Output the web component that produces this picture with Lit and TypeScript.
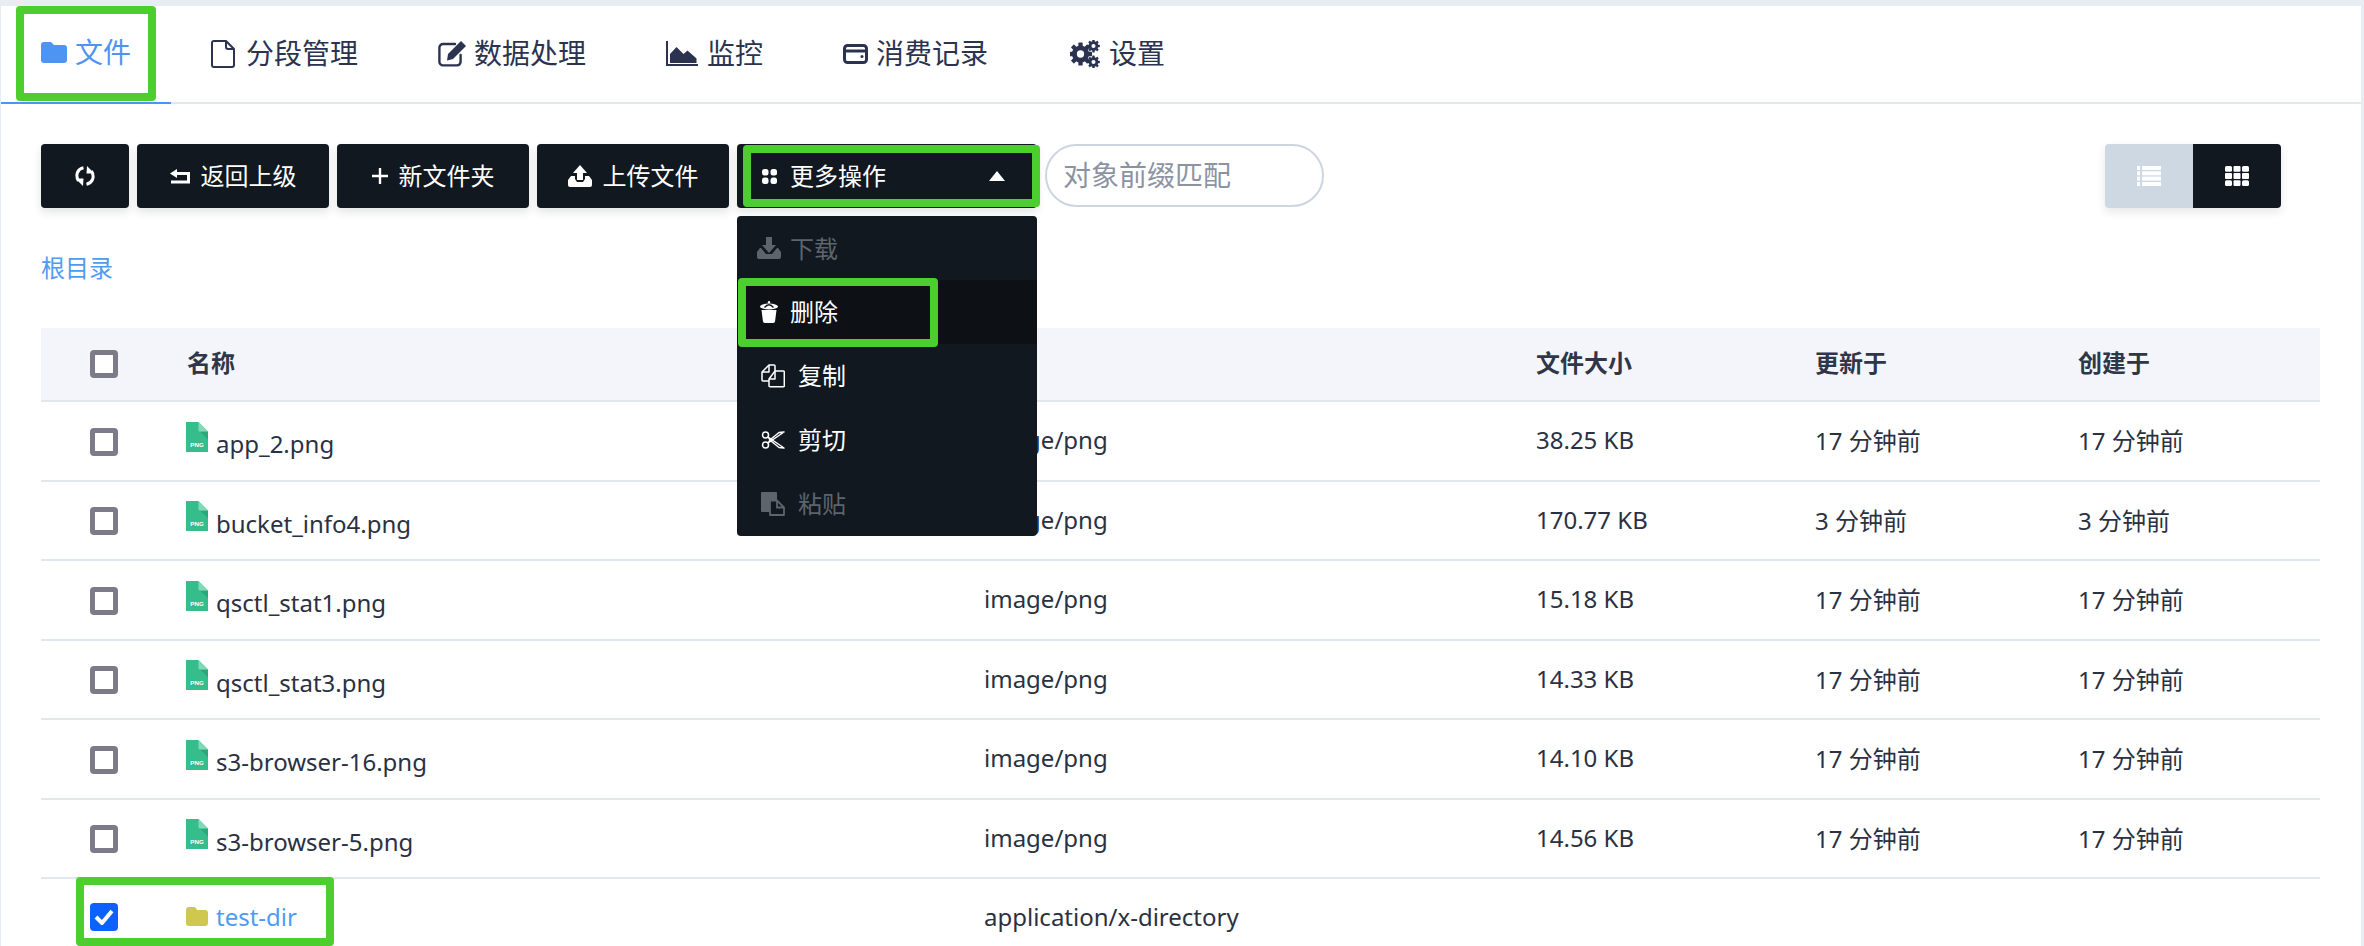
import { LitElement, html, css, svg } from "lit";
import { customElement } from "lit/decorators.js";

const gear = (cx: number, cy: number, r: number) => {
  const teeth = [];
  for (let i = 0; i < 8; i++) {
    teeth.push(svg`<rect x=${cx - r * 0.24} y=${cy - r * 1.28} width=${r * 0.48} height=${r * 0.6} rx="0.6" transform="rotate(${i * 45} ${cx} ${cy})" fill="currentColor"/>`);
  }
  return svg`${teeth}<circle cx=${cx} cy=${cy} r=${r * 0.68} fill="none" stroke="currentColor" stroke-width=${r * 0.55}/>`;
};

const ic = {
  folder: html`<svg class="i" width="26" height="21" viewBox="0 0 26 21"><path fill="currentColor" d="M3 0h6c1 0 2 .5 2.5 1.5L13 3h10a3 3 0 013 3v12a3 3 0 01-3 3H3a3 3 0 01-3-3V3a3 3 0 013-3z"/></svg>`,
  file: html`<svg class="i" width="24" height="28" viewBox="0 0 24 28"><path fill="none" stroke="currentColor" stroke-width="2" stroke-linejoin="round" d="M3 1h12l8 8v16a2 2 0 01-2 2H3a2 2 0 01-2-2V3a2 2 0 012-2zM15 1v6a2 2 0 002 2h6"/></svg>`,
  edit: html`<svg class="i" width="28" height="26" viewBox="0 0 28 26"><path fill="none" stroke="currentColor" stroke-width="2.4" stroke-linecap="round" d="M17 3H5a3.6 3.6 0 00-3.6 3.6v14A3.6 3.6 0 005 24.4h14a3.6 3.6 0 003.6-3.6V14"/><path fill="currentColor" d="M23 0l5 5-13 13-6 1.500 1-6.500z"/></svg>`,
  chart: html`<svg class="i" width="32" height="25" viewBox="0 0 32 25"><path fill="none" stroke="currentColor" stroke-width="2" d="M1 0v24h31"/><path fill="currentColor" d="M4 22v-9l6.500-7 7 7 4-3.500 9 8v4.500z"/></svg>`,
  card: html`<svg class="i" width="25" height="20" viewBox="0 0 25 20"><rect x="1.500" y="1.500" width="22" height="17" rx="3" fill="none" stroke="currentColor" stroke-width="3"/><path d="M2 7h21" stroke="currentColor" stroke-width="3"/><circle cx="19" cy="12.500" r="1.500" fill="currentColor"/></svg>`,
  cogs: html`<svg class="i cogs" width="30" height="28" viewBox="0 0 30 28">${gear(10.500, 14, 9)}${gear(23.500, 6, 5)}${gear(23.500, 22, 5)}</svg>`,
  refresh: html`<svg width="20" height="20" viewBox="0 0 20 20" fill="none" stroke="currentColor" stroke-width="3"><path d="M8.500 1.800C2.500 3 0 9 3.500 15"/><path d="M11.500 18.200C17.500 17 20 11 16.500 5"/><path fill="currentColor" stroke="none" d="M.5 12.500h8L8 20zM19.500 7.500h-8L12 0z"/></svg>`,
  reply: html`<svg width="20" height="15" viewBox="0 0 20 15" fill="none"><path stroke="currentColor" stroke-width="3" d="M5 4.500h13.500v8.500H1"/><path fill="currentColor" d="M0 4.500L7 0v9z"/></svg>`,
  plus: html`<svg width="16" height="16" viewBox="0 0 16 16"><path stroke="currentColor" stroke-width="2.400" d="M8 0v16M0 8h16"/></svg>`,
  upload: html`<svg width="24" height="22" viewBox="0 0 24 22"><path fill="currentColor" d="M12 0l7 8h-4v7H9V8H5zM3 11h4v3l2 3h6l2-3v-3h4l3 4v5a2 2 0 01-2 2H2a2 2 0 01-2-2v-5z"/></svg>`,
  download: html`<svg width="24" height="22" viewBox="0 0 24 22"><path fill="currentColor" d="M9 0h6v8h4l-7 8-7-8h4zM3 11h1l5 6h6l5-6h1l3 4v5a2 2 0 01-2 2H2a2 2 0 01-2-2v-5z"/></svg>`,
  grid4: html`<svg width="15" height="15" viewBox="0 0 15 15" fill="currentColor"><rect width="6.500" height="6.500" rx="2.500"/><rect x="8.500" width="6.500" height="6.500" rx="2.500"/><rect y="8.500" width="6.500" height="6.500" rx="2.500"/><rect x="8.500" y="8.500" width="6.500" height="6.500" rx="2.500"/></svg>`,
  trash: html`<svg width="18" height="22" viewBox="0 0 18 22"><path fill="currentColor" d="M1.500 9h15l-1.400 11a2 2 0 01-2 2H4.900a2 2 0 01-2-2z"/><ellipse cx="9" cy="5.500" rx="9" ry="3" fill="currentColor"/><circle cx="9" cy="1.200" r="1.200" fill="currentColor"/><path fill="none" stroke="#111820" stroke-width="1.300" d="M4.500 6.500Q9 1 13.500 6.500"/></svg>`,
  copy: html`<svg width="24" height="24" viewBox="0 0 24 24" fill="none" stroke="currentColor" stroke-width="1.500" stroke-linejoin="round"><path d="M8 17H2a1 1 0 01-1-1V8l7-7h5a1 1 0 011 1v5"/><path d="M1 8h7V1"/><path d="M8 15l6-8h8.500a.8.8 0 01.8.8V22a.8.8 0 01-.8.8H9a1 1 0 01-1-1z"/><path d="M8 15h6V7"/></svg>`,
  scissors: html`<svg width="24" height="18" viewBox="0 0 24 18" fill="none" stroke="currentColor" stroke-width="1.500" stroke-linejoin="round"><circle cx="4.500" cy="4" r="3"/><circle cx="4.500" cy="14" r="3"/><path d="M7 6l16 11-5-.5-8-6.500z"/><path d="M7 12l16-11-5 .5-8 6.500z"/></svg>`,
  paste: html`<svg width="24" height="24" viewBox="0 0 24 24"><path fill="currentColor" d="M1 0h14a1 1 0 011 1v19H1a1 1 0 01-1-1V1a1 1 0 011-1z"/><path fill="#111820" stroke="currentColor" stroke-width="1.800" stroke-linejoin="round" d="M9 8.500h7l7 7v7.500H9z"/><path fill="none" stroke="currentColor" stroke-width="1.800" d="M16 8.500v7h7"/></svg>`,
  list: html`<svg width="24" height="20" viewBox="0 0 24 20" fill="currentColor"><rect width="3" height="4"/><rect x="5" width="19" height="4"/><rect y="5.300" width="3" height="4"/><rect x="5" y="5.300" width="19" height="4"/><rect y="10.600" width="3" height="4"/><rect x="5" y="10.600" width="19" height="4"/><rect y="16" width="3" height="4"/><rect x="5" y="16" width="19" height="4"/></svg>`,
  grid: html`<svg width="24" height="20" viewBox="0 0 24 20" fill="currentColor"><rect width="7" height="5.800" rx="1.600"/><rect x="8.500" width="7" height="5.800" rx="1"/><rect x="17" width="7" height="5.800" rx="1.600"/><rect y="7.100" width="7" height="5.800" rx="1"/><rect x="8.500" y="7.100" width="7" height="5.800" rx="1"/><rect x="17" y="7.100" width="7" height="5.800" rx="1"/><rect y="14.200" width="7" height="5.800" rx="1.600"/><rect x="8.500" y="14.200" width="7" height="5.800" rx="1"/><rect x="17" y="14.200" width="7" height="5.800" rx="1.600"/></svg>`,
};

const png = html`<svg class="ficon" width="22" height="30" viewBox="0 0 22 30"><path fill="#36bd8c" d="M0 0h12.500L22 9.500V30H0z"/><path fill="#2ca67b" d="M14 9.500L22 17.500V9.500z"/><path fill="#82d9ba" d="M12.500 0L22 9.500H14a1.500 1.500 0 01-1.500-1.500z"/><text x="11" y="25" text-anchor="middle" font-size="6.200" font-weight="700" fill="#fff" font-family="Liberation Sans, sans-serif">PNG</text></svg>`;

const rows = [
  ["app_2.png", "image/png", "38.25 KB", "17 分钟前", "17 分钟前"],
  ["bucket_info4.png", "image/png", "170.77 KB", "3 分钟前", "3 分钟前"],
  ["qsctl_stat1.png", "image/png", "15.18 KB", "17 分钟前", "17 分钟前"],
  ["qsctl_stat3.png", "image/png", "14.33 KB", "17 分钟前", "17 分钟前"],
  ["s3-browser-16.png", "image/png", "14.10 KB", "17 分钟前", "17 分钟前"],
  ["s3-browser-5.png", "image/png", "14.56 KB", "17 分钟前", "17 分钟前"],
];

const tabs = [
  ["文件", ic.folder, "g8"],
  ["分段管理", ic.file, "g11"],
  ["数据处理", ic.edit, "g8"],
  ["监控", ic.chart, "g9"],
  ["消费记录", ic.card, "g8"],
  ["设置", ic.cogs, "g9"],
] as const;

@customElement("app-root")
export class AppRoot extends LitElement {
  static styles = css`
    :host {
      display: block;
      position: relative;
      height: 946px;
      overflow: hidden;
      background: #e8edf4;
      padding: 6px 3px 0 1px;
      box-sizing: border-box;
      font-family: "Noto Sans", "Noto Sans CJK SC", sans-serif;
      font-size: 24px;
      color: #2a3142;
    }
    .panel { background: #fff; height: 100%; }
    .tabs {
      display: flex;
      height: 98px;
      box-sizing: border-box;
      border-bottom: 2px solid #e1e7ed;
    }
    .tab {
      display: flex;
      align-items: center;
      padding: 0 40px 3px;
      height: 98px;
      box-sizing: border-box;
      font-size: 28px;
      color: #2b3350;
    }
    .tab.g8 { gap: 8px; }
    .tab.g9 { gap: 9px; }
    .tab.g11 { gap: 11px; }
    .tab span { margin-bottom: 3px; }
    .tab.on { color: #4e94f5; border-bottom: 2px solid #4e94f5; }
    .cogs { margin-left: 2px; }
    .toolbar { display: flex; gap: 8px; margin: 40px 80px 0 40px; height: 64px; }
    .btn {
      display: flex;
      align-items: center;
      justify-content: center;
      gap: 11px;
      width: 192px;
      height: 64px;
      background: #111820;
      color: #fff;
      border-radius: 4px;
      box-shadow: 0 4px 10px rgba(17, 24, 32, 0.12);
      flex: none;
    }
    .btn span { margin-bottom: 3px; }
    .btn.sq { width: 88px; }
    .btn.more { width: 300px; justify-content: flex-start; gap: 13px; padding: 0 32px 0 25px; box-sizing: border-box; }
    .tri { margin-left: auto; width: 0; height: 0; border: 8px solid transparent; border-top: 0; border-bottom: 10px solid #fff; }
    .search {
      width: 279px;
      height: 63px;
      box-sizing: border-box;
      border: 2px solid #cdd6e0;
      border-radius: 32px;
      padding: 0 0 3px 16px;
      display: flex;
      align-items: center;
      font-size: 28px;
      color: #8b93a3;
      background: #fff;
    }
    .toggle { margin-left: auto; display: flex; border-radius: 4px; box-shadow: 0 4px 10px rgba(17, 24, 32, 0.1); overflow: hidden; }
    .toggle div { width: 88px; height: 64px; display: flex; align-items: center; justify-content: center; color: #fff; background: #111820; }
    .toggle div.off { background: #cdd8e3; }
    .crumb { margin: 42px 0 0 40px; line-height: 36px; color: #4f9bf0; }
    .table { margin: 42px 41px 0 40px; }
    .row {
      display: grid;
      grid-template-columns: 145px 798px 552px 279px 263px 1fr;
      align-items: center;
      height: 79.500px;
      box-sizing: border-box;
      border-bottom: 2px solid #e1e7ed;
    }
    .row > .c { padding-bottom: 2px; }
    .row.head { height: 74px; background: #f3f5fa; font-weight: 700; color: #2f3648; }
    .row.head > .c { padding-bottom: 6px; }
    .row.head .nm { padding-left: 1px; padding-bottom: 6px; }
    .cb {
      width: 28px;
      height: 28px;
      box-sizing: border-box;
      border: 5px solid #7d7b8a;
      border-radius: 4px;
      margin-left: 49px;
      background: #fff;
    }
    .row.file .cb { margin-top: 2px; }
    .cb.on { background: #0d61ff; border: 0; display: flex; align-items: center; justify-content: center; margin-bottom: 2px; }
    .nm { display: flex; align-items: center; gap: 8px; }
    .row.file .nm { padding-top: 6px; }
    .ficon { flex: none; margin-bottom: 14px; }
    .dir { color: #4f9bf0; padding-bottom: 3px; }
    .dicon { flex: none; color: #cfc850; display: flex; }
    .menu {
      position: absolute;
      left: 737px;
      top: 216px;
      width: 300px;
      background: #111820;
      border-radius: 4px;
      overflow: hidden;
      color: #fff;
      z-index: 2;
    }
    .item { display: flex; align-items: center; height: 64px; padding-left: 20px; }
    .item b { font-weight: 400; margin-bottom: 3px; }
    .item.first b { margin-bottom: 1px; }
    .slot { width: 33px; display: flex; flex: none; }
    .slot.w2 { width: 41px; padding-left: 4px; box-sizing: border-box; }
    .slot.t { padding-left: 3px; box-sizing: border-box; }
    .item.dis { color: #5e646c; }
    .item.hov { background: #0d1116; }
    .hl {
      position: absolute;
      box-sizing: border-box;
      border: 8px solid #4ccf2e;
      border-radius: 4px;
      z-index: 3;
      pointer-events: none;
    }
    .hl.a { left: 16px; top: 6px; width: 140px; height: 95px; }
    .hl.b { left: 743px; top: 145px; width: 297px; height: 62px; }
    .hl.c { left: 738px; top: 278px; width: 200px; height: 69px; }
    .hl.d { left: 76px; top: 877px; width: 258px; height: 69px; }
  `;

  render() {
    return html`
      <div class="panel">
        <div class="tabs">
          ${tabs.map(([t, i, g], n) => html`<div class="tab ${g} ${n === 0 ? "on" : ""}">${i}<span>${t}</span></div>`)}
        </div>
        <div class="toolbar">
          <div class="btn sq">${ic.refresh}</div>
          <div class="btn">${ic.reply}<span>返回上级</span></div>
          <div class="btn">${ic.plus}<span>新文件夹</span></div>
          <div class="btn">${ic.upload}<span>上传文件</span></div>
          <div class="btn more">${ic.grid4}<span>更多操作</span><i class="tri"></i></div>
          <div class="search">对象前缀匹配</div>
          <div class="toggle"><div class="off">${ic.list}</div><div>${ic.grid}</div></div>
        </div>
        <div class="crumb">根目录</div>
        <div class="table">
          <div class="row head">
            <div class="cb"></div>
            <div class="nm">名称</div>
            <div class="c"></div>
            <div class="c">文件大小</div>
            <div class="c">更新于</div>
            <div class="c">创建于</div>
          </div>
          ${rows.map(
            (r) => html`<div class="row file">
              <div class="cb"></div>
              <div class="nm">${png}<span>${r[0]}</span></div>
              <div class="c">${r[1]}</div>
              <div class="c">${r[2]}</div>
              <div class="c">${r[3]}</div>
              <div class="c">${r[4]}</div>
            </div>`
          )}
          <div class="row">
            <div class="cb on"><svg width="20" height="16" viewBox="0 0 20 16"><path fill="none" stroke="#fff" stroke-width="4" d="M2 8l6 6L18 2"/></svg></div>
            <div class="nm dir"><span class="dicon"><svg width="22" height="19" viewBox="0 0 22 19"><path fill="currentColor" d="M3 0h5c1 0 1.500.5 2 1.200L11 3h8a3 3 0 013 3v10a3 3 0 01-3 3H3a3 3 0 01-3-3V3a3 3 0 013-3z"/></svg></span><span>test-dir</span></div>
            <div class="c">application/x-directory</div>
            <div></div><div></div><div></div>
          </div>
        </div>
      </div>
      <div class="menu">
        <div class="item dis first"><span class="slot">${ic.download}</span><b>下载</b></div>
        <div class="item hov"><span class="slot t">${ic.trash}</span><b>删除</b></div>
        <div class="item"><span class="slot w2">${ic.copy}</span><b>复制</b></div>
        <div class="item"><span class="slot w2">${ic.scissors}</span><b>剪切</b></div>
        <div class="item dis"><span class="slot w2">${ic.paste}</span><b>粘贴</b></div>
      </div>
      <div class="hl a"></div>
      <div class="hl b"></div>
      <div class="hl c"></div>
      <div class="hl d"></div>
    `;
  }
}
